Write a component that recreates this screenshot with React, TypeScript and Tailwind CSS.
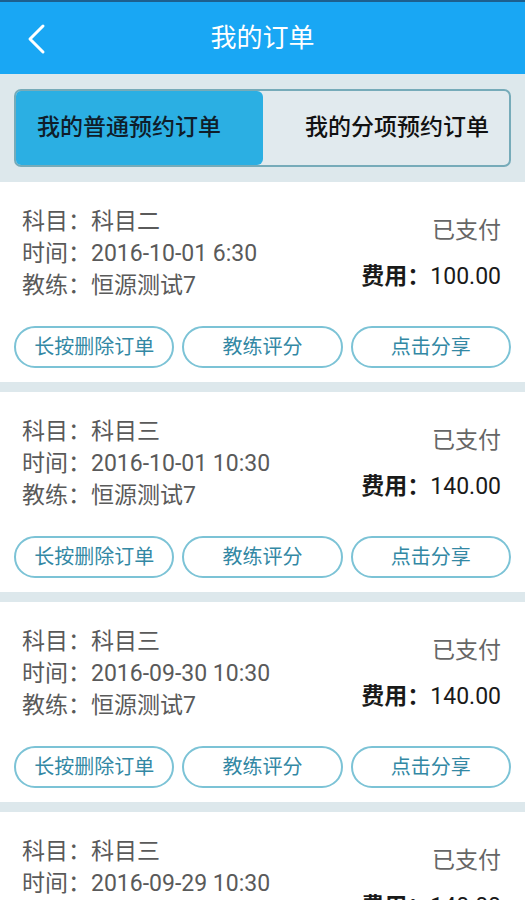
import React from "react";

const orders = [
  { subject: "科目二", time: "2016-10-01 6:30", coach: "恒源测试7", status: "已支付", fee: "100.00" },
  { subject: "科目三", time: "2016-10-01 10:30", coach: "恒源测试7", status: "已支付", fee: "140.00" },
  { subject: "科目三", time: "2016-09-30 10:30", coach: "恒源测试7", status: "已支付", fee: "140.00" },
  { subject: "科目三", time: "2016-09-29 10:30", coach: "恒源测试7", status: "已支付", fee: "140.00" },
];

const font = { fontFamily: "Roboto, 'Noto Sans CJK SC', sans-serif" };

export default function App() {
  return (
    <div className="w-[525px] h-[900px] overflow-hidden bg-[#dde8ec]" style={font}>
      {/* Header */}
      <div className="h-[2px] bg-[#1d5f8e]" />
      <header className="relative h-[72px] bg-[#19a7f4] flex items-center justify-center">
        <svg className="absolute left-[26px] top-[21px]" width="22" height="32" viewBox="0 0 22 32" fill="none">
          <path d="M17 3 L4 16 L17 29" stroke="white" strokeWidth="3" strokeLinecap="round" strokeLinejoin="round" />
        </svg>
        <h1 className="text-white text-[26px] leading-none">我的订单</h1>
      </header>

      {/* Tabs */}
      <div className="px-[14px] pt-[15px] pb-[15px]">
        <div className="flex h-[78px] rounded-[7px] border-2 border-[#76abb9] bg-[#e1eaee] overflow-hidden">
          <div className="w-[247px] bg-[#2bafe3] rounded-r-[6px] flex items-center pl-[21px] text-[23px] font-medium text-[#0f1d2a]">
            我的普通预约订单
          </div>
          <div className="flex-1 flex items-center justify-end pr-[20px] text-[23px] font-medium text-[#111]">
            我的分项预约订单
          </div>
        </div>
      </div>

      {/* Orders */}
      <div className="flex flex-col gap-[10px]">
        {orders.map((o, i) => (
          <div key={i} className="bg-white pt-[24px] pb-[14px]">
            <div className="flex justify-between pl-[22px] pr-[24px]">
              <div className="text-[23px] leading-[32px] text-[#5a5a5a]">
                <div>科目：{o.subject}</div>
                <div>时间：{o.time}</div>
                <div>教练：{o.coach}</div>
              </div>
              <div className="flex flex-col items-end pt-[9px]">
                <div className="text-[23px] leading-[32px] text-[#666]">{o.status}</div>
                <div className="text-[23px] leading-[32px] mt-[14px] text-[#1a1a1a]">
                  <span className="font-semibold">费用：</span>
                  {o.fee}
                </div>
              </div>
            </div>
            <div className="grid grid-cols-3 gap-2 px-[14px] mt-[24px]">
              {["长按删除订单", "教练评分", "点击分享"].map((b) => (
                <div
                  key={b}
                  className="h-[42px] rounded-full border-2 border-[#7cc3d6] flex items-center justify-center text-[20px] text-[#3388a4]"
                >
                  {b}
                </div>
              ))}
            </div>
          </div>
        ))}
      </div>
    </div>
  );
}
